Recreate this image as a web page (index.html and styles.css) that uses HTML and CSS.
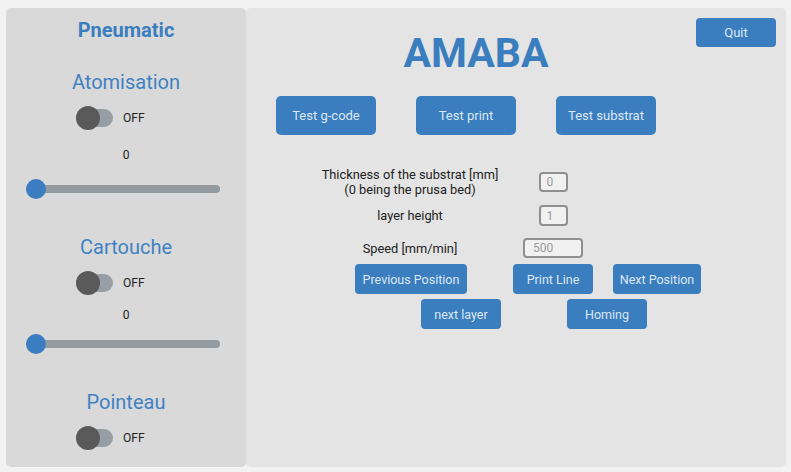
FILE: index.html
```html
<!DOCTYPE html>
<html lang="en">
<head>
<meta charset="utf-8">
<title>AMABA</title>
<link rel="stylesheet" href="styles.css">
</head>
<body>
<div class="app">
  <aside class="side">
    <div class="side-title">Pneumatic</div>

    <div class="sec-title sec-first">Atomisation</div>
    <div class="toggle"><div class="switch"><div class="switch-track"></div><div class="switch-knob"></div></div><span class="toggle-label">OFF</span></div>
    <div class="value value-a">0</div>
    <div class="slider slider-a"><div class="slider-track"></div><div class="slider-thumb"></div></div>

    <div class="sec-title">Cartouche</div>
    <div class="toggle"><div class="switch"><div class="switch-track"></div><div class="switch-knob"></div></div><span class="toggle-label">OFF</span></div>
    <div class="value value-b">0</div>
    <div class="slider slider-b"><div class="slider-track"></div><div class="slider-thumb"></div></div>

    <div class="sec-title">Pointeau</div>
    <div class="toggle"><div class="switch"><div class="switch-track"></div><div class="switch-knob"></div></div><span class="toggle-label">OFF</span></div>
  </aside>

  <main class="main">
    <header class="header">
      <h1 class="brand">AMABA</h1>
      <button class="btn btn-quit">Quit</button>
    </header>

    <div class="test-row">
      <button class="btn btn-test">Test g-code</button>
      <button class="btn btn-test">Test print</button>
      <button class="btn btn-test">Test substrat</button>
    </div>

    <div class="form">
      <div class="form-label">Thickness of the substrat [mm]<br>(0 being the prusa bed)</div>
      <div class="form-cell"><input class="field field-sm" type="text" value="0"></div>
      <div class="form-label">layer height</div>
      <div class="form-cell"><input class="field field-sm field-tall" type="text" value="1"></div>
      <div class="form-label">Speed [mm/min]</div>
      <div class="form-cell"><input class="field field-lg" type="text" value="500"></div>
    </div>

    <div class="nav-row nav-row-1">
      <button class="btn btn-nav btn-prev">Previous Position</button>
      <button class="btn btn-nav btn-line">Print Line</button>
      <button class="btn btn-nav btn-next">Next Position</button>
    </div>
    <div class="nav-row nav-row-2">
      <button class="btn btn-nav btn-layer">next layer</button>
      <button class="btn btn-nav btn-home">Homing</button>
    </div>
  </main>
</div>
</body>
</html>
```

FILE: styles.css
```css
* { box-sizing: border-box; }

html, body {
  margin: 0;
  padding: 0;
  background: #f2f2f2;
  font-family: Roboto, "Liberation Sans", sans-serif;
  color: #222;
}

.app {
  display: flex;
  width: 791px;
  height: 472px;
  padding: 8px 5px 5px 6px;
}

/* ---------- left panel ---------- */
.side {
  width: 240px;
  height: 459px;
  background: #d9d9d9;
  border-radius: 5px;
  display: flex;
  flex-direction: column;
  align-items: center;
  padding-top: 10px;
}

.side-title {
  font-size: 20px;
  font-weight: 700;
  line-height: 24px;
  color: #3a7ebf;
}

.sec-title {
  font-size: 20px;
  line-height: 24px;
  color: #3f82c4;
  margin-top: 36px;
}
.sec-first { margin-top: 28px; }

.toggle {
  align-self: flex-start;
  margin-left: 70px;
  margin-top: 12px;
  height: 24px;
  display: flex;
  align-items: center;
}

.switch {
  position: relative;
  width: 37px;
  height: 24px;
}
.switch-track {
  position: absolute;
  left: 0;
  top: 3px;
  width: 37px;
  height: 18px;
  border-radius: 9px;
  background: #979ea4;
}
.switch-knob {
  position: absolute;
  left: 0;
  top: 0;
  width: 24px;
  height: 24px;
  border-radius: 50%;
  background: #5a5a5a;
}

.toggle-label {
  margin-left: 10px;
  font-size: 12px;
  color: #222;
}

.value {
  font-size: 12px;
  line-height: 16px;
  color: #222;
}
.value-a { margin-top: 17px; }
.value-b { margin-top: 12px; }

.slider {
  position: relative;
  align-self: flex-start;
  margin-left: 20px;
  width: 194px;
  height: 20px;
  display: flex;
  align-items: center;
}
.slider-a { margin-top: 16px; }
.slider-b { margin-top: 11px; }

.slider-track {
  width: 100%;
  height: 8px;
  border-radius: 4px;
  background: #939aa0;
}
.slider-thumb {
  position: absolute;
  left: 0;
  top: 0;
  width: 20px;
  height: 20px;
  border-radius: 50%;
  background: #3b7dc0;
}

/* ---------- main panel ---------- */
.main {
  width: 540px;
  height: 459px;
  background: #e4e4e4;
  border-radius: 5px;
}

.header {
  display: flex;
  align-items: flex-start;
  height: 70px;
}

.brand {
  flex: 1;
  margin: 20px 0 0 0;
  padding-left: 20px;
  text-align: center;
  font-size: 41px;
  line-height: 50px;
  font-weight: 700;
  color: #3a7ebf;
}

.btn {
  font-family: Roboto, "Liberation Sans", sans-serif;
  font-size: 13px;
  color: #dde7f2;
  background: #3a7ebf;
  border: none;
  border-radius: 4px;
  padding: 0;
  margin: 0;
  display: flex;
  align-items: center;
  justify-content: center;
}

.btn-quit {
  width: 80px;
  height: 29px;
  margin: 10px 10px 0 10px;
}

.test-row {
  display: flex;
  gap: 40px;
  margin-top: 18px;
  padding-left: 30px;
}
.btn-test {
  width: 100px;
  height: 39px;
  border-radius: 5px;
}

.form {
  display: grid;
  grid-template-columns: 200px 60px;
  grid-template-rows: 30px 37px 28px;
  column-gap: 13px;
  margin-top: 32px;
  margin-left: 64px;
  width: 273px;
}
.form-label {
  font-size: 12.8px;
  line-height: 15px;
  text-align: center;
  align-self: center;
  color: #222;
}
.form-cell {
  display: flex;
  align-items: center;
  justify-content: center;
}
.field {
  font-family: Roboto, "Liberation Sans", sans-serif;
  font-size: 12px;
  color: #9a9a9a;
  background: #f1f1f1;
  border: 2px solid #8f8f8f;
  border-radius: 4px;
  height: 20px;
  padding: 0 0 0 6px;
  margin: 0;
  outline: none;
}
.field-sm { width: 29px; }
.field-tall { height: 21px; }
.field-lg { width: 60px; padding-left: 8px; }

.nav-row {
  display: flex;
}
.nav-row-1 {
  margin-top: 2px;
  padding-left: 109px;
}
.nav-row-2 {
  margin-top: 5px;
  padding-left: 175px;
}
.btn-nav {
  height: 30px;
  width: 80px;
  font-size: 12.5px;
}
.btn-prev { width: 112px; }
.btn-line { margin-left: 46px; }
.btn-next { width: 88px; margin-left: 20px; }
.btn-home { margin-left: 66px; }
```
